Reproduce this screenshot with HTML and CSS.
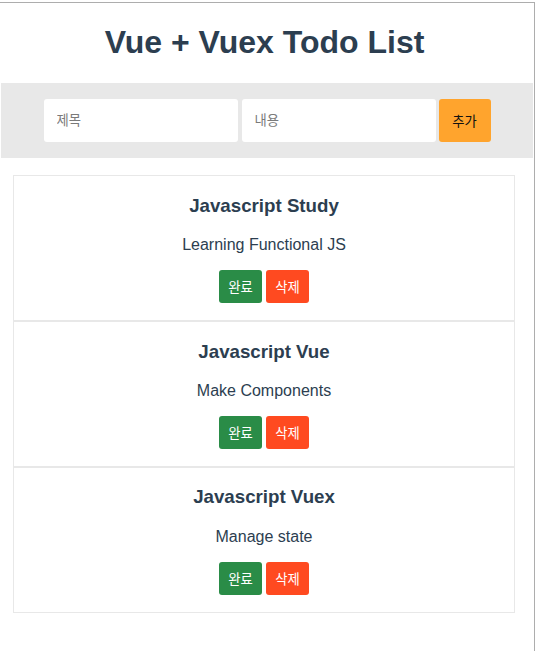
FILE: index.html
```html
<!DOCTYPE html>
<html lang="ko">
<head>
<meta charset="utf-8">
<title>Vue + Vuex Todo List</title>
<link rel="stylesheet" href="styles.css">
</head>
<body>
<div class="frame">
  <div class="app">
    <h1 class="app-title">Vue + Vuex Todo List</h1>
    <div class="input-bar">
      <input class="field field-title" type="text" placeholder="제목">
      <input class="field field-content" type="text" placeholder="내용">
      <button class="add-btn">추가</button>
    </div>
    <ul class="todo-list">
      <li class="todo-item">
        <h3 class="todo-title">Javascript Study</h3>
        <p class="todo-desc">Learning Functional JS</p>
        <div class="todo-actions">
          <button class="btn btn-done">완료</button>
          <button class="btn btn-delete">삭제</button>
        </div>
      </li>
      <li class="todo-item">
        <h3 class="todo-title">Javascript Vue</h3>
        <p class="todo-desc">Make Components</p>
        <div class="todo-actions">
          <button class="btn btn-done">완료</button>
          <button class="btn btn-delete">삭제</button>
        </div>
      </li>
      <li class="todo-item">
        <h3 class="todo-title">Javascript Vuex</h3>
        <p class="todo-desc">Manage state</p>
        <div class="todo-actions">
          <button class="btn btn-done">완료</button>
          <button class="btn btn-delete">삭제</button>
        </div>
      </li>
    </ul>
  </div>
</div>
</body>
</html>
```

FILE: styles.css
```css
html, body {
  margin: 0;
  padding: 0;
  background: #ffffff;
}

.frame {
  margin-top: 2px;
  width: 535px;
  height: 649px;
  box-sizing: border-box;
  border-top: 1px solid #adadad;
  border-right: 1px solid #adadad;
}

.app {
  font-family: "Liberation Sans", Arial, "Noto Sans CJK KR", sans-serif;
  color: #2c3e50;
  text-align: center;
}

.app-title {
  font-size: 32px;
  font-weight: bold;
  margin: 21.44px 0;
  padding-right: 5px;
}

.input-bar {
  margin: 0 1px;
  padding: 16px 0;
  background: #e8e8e8;
  display: flex;
  justify-content: center;
}

.field {
  width: 194px;
  height: 43px;
  box-sizing: border-box;
  border: none;
  border-radius: 3px;
  background: #ffffff;
  padding: 0 13px;
  font-family: "Liberation Sans", "Noto Sans CJK KR", sans-serif;
  font-size: 13.33px;
  color: #333;
  outline: none;
}

.field-title {
  margin-right: 4px;
}

.field-content {
  margin-right: 3px;
}

.field::placeholder {
  color: #7a7a7a;
}

.add-btn {
  width: 52px;
  height: 43px;
  box-sizing: border-box;
  border: none;
  border-radius: 3px;
  background: #ffa42d;
  color: #111;
  font-family: "Liberation Sans", "Noto Sans CJK KR", sans-serif;
  font-size: 13.33px;
  padding: 0;
}

.todo-list {
  list-style: none;
  margin: 17px 0 0 13px;
  padding: 0;
  width: 502px;
}

.todo-item {
  border: 1px solid #e8e8e8;
  padding: 0 0 16.5px;
}

.todo-title {
  font-size: 18.72px;
  font-weight: bold;
  margin: 18.72px 0;
}

.todo-desc {
  font-size: 16px;
  margin: 16px 0;
  padding-top: 1px;
}

.todo-actions {
  display: flex;
  justify-content: center;
  gap: 4px;
}

.btn {
  height: 33px;
  width: 43px;
  box-sizing: border-box;
  border: none;
  border-radius: 3px;
  color: #ffffff;
  font-family: "Liberation Sans", "Noto Sans CJK KR", sans-serif;
  font-size: 13.33px;
  padding: 0;
}

.btn-done {
  background: #2a8c47;
}

.btn-delete {
  background: #ff4a20;
}
```
